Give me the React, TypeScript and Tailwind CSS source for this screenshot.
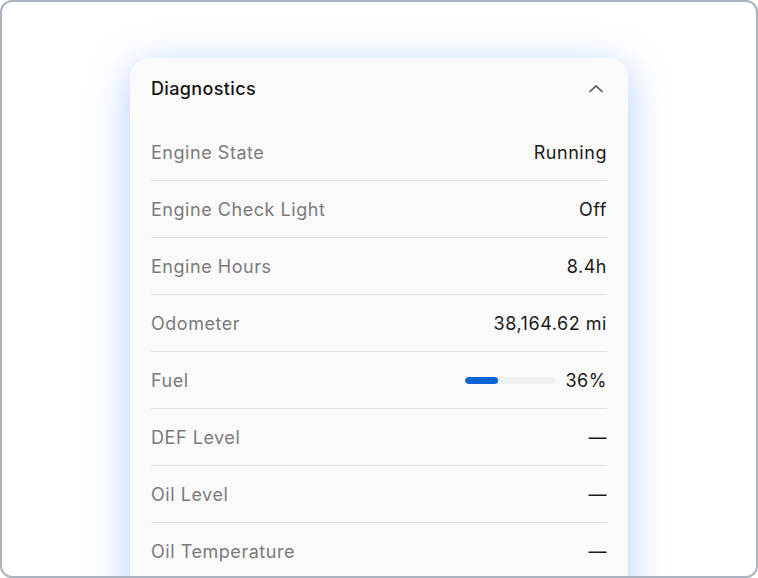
import React from 'react';

const rows: { label: string; value: string; fuel?: number }[] = [
  { label: 'Engine State', value: 'Running' },
  { label: 'Engine Check Light', value: 'Off' },
  { label: 'Engine Hours', value: '8.4h' },
  { label: 'Odometer', value: '38,164.62 mi' },
  { label: 'Fuel', value: '36%', fuel: 36 },
  { label: 'DEF Level', value: '—' },
  { label: 'Oil Level', value: '—' },
  { label: 'Oil Temperature', value: '—' },
];

const App = () => {
  return (
    <div className="w-[758px] h-[578px] bg-white overflow-hidden">
      <div
        className="w-full h-full border-2 border-[#aab4c0] rounded-[12px] overflow-hidden bg-white"
        style={{ fontFamily: 'Inter, "Noto Sans", sans-serif' }}
      >
        <div className="mx-auto mt-[56px] w-[498px] rounded-[20px] bg-[#fafafa] px-[21px] pb-[40px] shadow-[0_8px_40px_rgba(59,130,246,0.38)]">
          <div className="h-[66px] flex items-start justify-between pt-[19px]">
            <span className="text-[18px] leading-[24px] font-medium tracking-[0.02em] text-[#151515]">Diagnostics</span>
            <svg width="16" height="16" viewBox="0 0 16 16" className="mt-[4px] mr-[3px]" fill="none">
              <path d="M2 10.5 L8 4.8 L14 10.5" stroke="#5a5a5a" strokeWidth="1.7" strokeLinecap="round" strokeLinejoin="round" />
            </svg>
          </div>
          {rows.map((r) => (
            <div key={r.label} className="h-[57px] flex items-center justify-between border-b border-[#e4e4e4]">
              <span className="text-[18px] tracking-[0.03em] text-[#7b7b7b]">{r.label}</span>
              <div className="flex items-center gap-[10px]">
                {r.fuel !== undefined && (
                  <div className="w-[90px] h-[7px] rounded-full bg-[#efefef] overflow-hidden">
                    <div className="h-full rounded-full bg-[#0b63d6]" style={{ width: `${r.fuel}%` }} />
                  </div>
                )}
                <span className="text-[18px] tracking-[0.03em] text-[#1a1a1a]">{r.value}</span>
              </div>
            </div>
          ))}
        </div>
      </div>
    </div>
  );
};

export default App;
